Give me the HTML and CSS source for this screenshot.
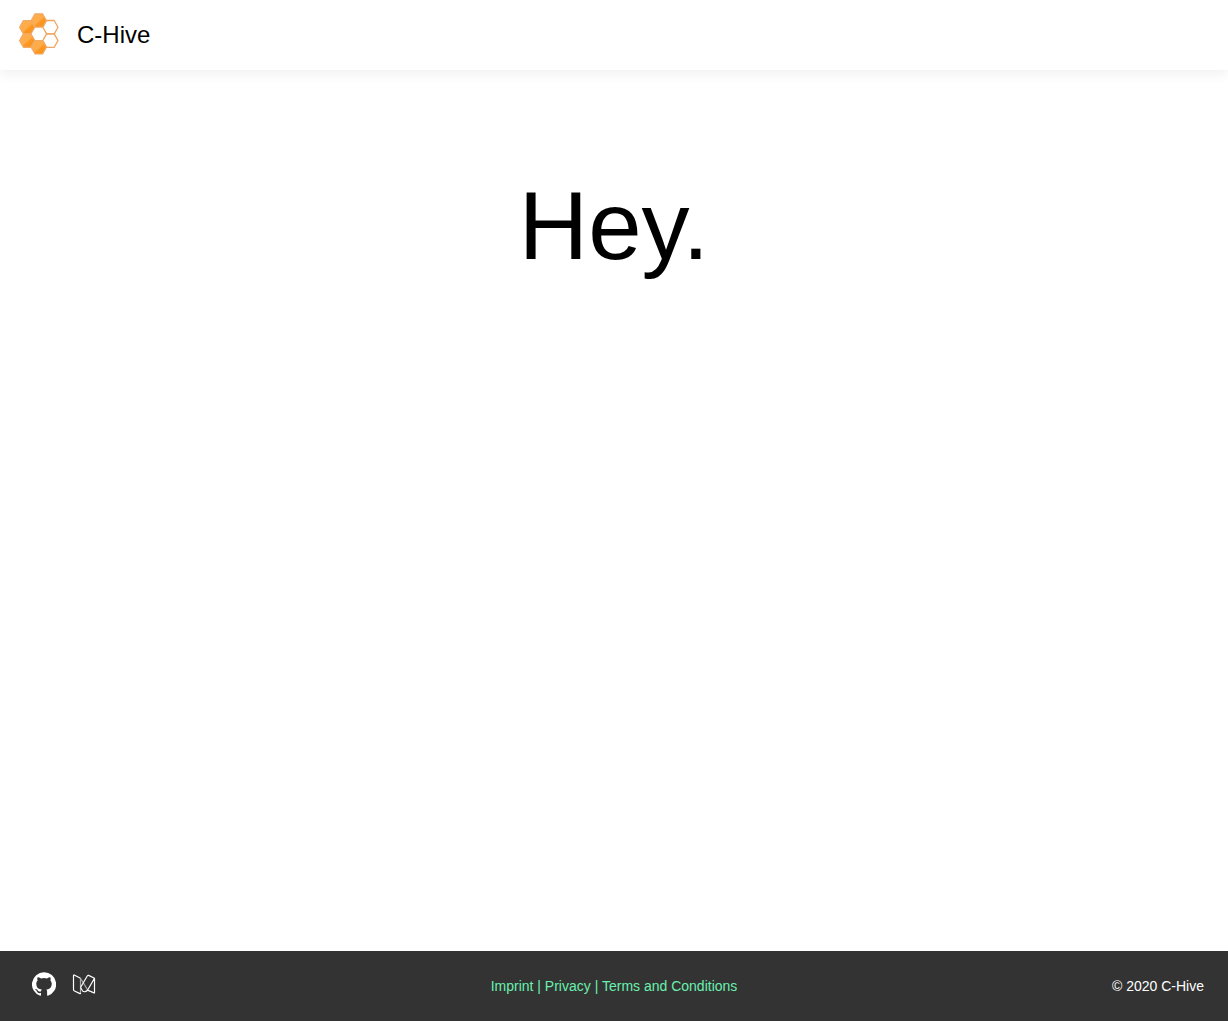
FILE: index.html
```html
<!DOCTYPE html>
<html lang="en">
<head>
<meta charset="utf-8">
<meta name="viewport" content="width=device-width, initial-scale=1">
<title>C-Hive</title>
<link rel="stylesheet" href="styles.css">
</head>
<body>
<header class="header">
  <a class="brand" href="#">
    <svg class="brand-logo" viewBox="0 0 40 42" aria-hidden="true">
      <defs>
        <linearGradient id="honey" x1="0" y1="0" x2="1" y2="1">
          <stop offset="0" stop-color="#ffb04a"/>
          <stop offset=".5" stop-color="#ffab4c"/>
          <stop offset=".6" stop-color="#fb971f"/>
          <stop offset="1" stop-color="#f7931e"/>
        </linearGradient>
        <path id="cell" d="M-7.6 0L-3.8 -6.7H3.8L7.6 0L3.8 6.7H-3.8Z"/>
      </defs>
      <g fill="none" stroke="#f2a45c" stroke-width="1.3" stroke-linejoin="round">
        <use href="#cell" x="31.4" y="14.2"/>
        <use href="#cell" x="31.4" y="27.6"/>
      </g>
      <g fill="url(#honey)" stroke="#f0aa68" stroke-width="1.2" stroke-linejoin="round">
        <use href="#cell" x="8.2" y="14.2"/>
        <use href="#cell" x="8.2" y="27.6"/>
        <use href="#cell" x="19.8" y="7.5"/>
        <use href="#cell" x="19.8" y="34.3"/>
      </g>
    </svg>
    <span>C-Hive</span>
  </a>
</header>
<main class="main">
  <h1 class="greeting">Hey.</h1>
</main>
<footer class="footer">
  <div class="social">
    <a class="social-link" href="#" aria-label="GitHub">
      <svg class="icon" viewBox="0 0 24 24" fill="#fff" aria-hidden="true"><path d="M12 .3a12 12 0 0 0-3.8 23.4c.6.1.8-.3.8-.6v-2c-3.3.7-4-1.6-4-1.6-.6-1.4-1.4-1.8-1.4-1.8-1-.7.1-.7.1-.7 1.2 0 1.9 1.2 1.9 1.2 1 1.8 2.8 1.3 3.5 1 0-.8.4-1.3.7-1.6-2.7-.3-5.5-1.3-5.5-6 0-1.2.5-2.3 1.3-3.1-.2-.4-.6-1.6 0-3.2 0 0 1-.3 3.4 1.2a11.5 11.5 0 0 1 6 0c2.3-1.500 3.300-1.200 3.300-1.200.7 1.600.2 2.800.1 3.200.8.800 1.300 1.900 1.300 3.200 0 4.600-2.800 5.600-5.500 5.900.5.400.9 1 .9 2.200v3.300c0 .3.1.7.8.6A12 12 0 0 0 12 .3"/></svg>
    </a>
    <a class="social-link" href="#" aria-label="Medium">
      <svg class="icon" viewBox="0 0 24 24" fill="none" stroke="#fff" stroke-width="1.2" stroke-linejoin="round" aria-hidden="true"><path stroke="#aaa" d="M8.500 6.300L16 18.500L22.500 21M8.500 6.300V21.700"/><path d="M8.500 6.300L2.200 3Q1.500 2.800 1.500 3.700V17.500Q1.500 18.600 2.500 19L8 21.600Q8.500 21.700 8.500 21M8.500 15.500L15.400 3.800Q15.800 3 16.600 3.400L22.500 6.300V20.500Q22.500 21.200 21.700 20.800L16 18.300M22.500 6.300L15.500 18.200Q12.500 21 10.500 18.800L8.500 15.500"/></svg>
    </a>
  </div>
  <nav class="legal"><a href="#">Imprint</a> | <a href="#">Privacy</a> | <a href="#">Terms and Conditions</a></nav>
  <div class="copyright">© 2020 C-Hive</div>
</footer>
</body>
</html>
```
FILE: styles.css
```css
* {
  box-sizing: border-box;
}

body {
  display: flex;
  flex-direction: column;
  min-height: 100vh;
  margin: 0;
  background: #fff;
  color: #000;
  font-family: "Liberation Sans", Arial, sans-serif;
}

a {
  color: inherit;
  text-decoration: none;
}

.header {
  display: flex;
  align-items: center;
  min-height: 70px;
  padding: 0 19px;
  box-shadow: 0 4px 12px rgba(0, 0, 0, 0.06);
}

.brand {
  display: flex;
  align-items: center;
  gap: 18px;
  font-size: 24px;
  line-height: 32px;
}

.brand-logo {
  width: 40px;
  height: 42px;
  margin-bottom: 2px;
}

.main {
  flex: 1;
  padding: 108px 24px;
}

.greeting {
  margin: 0;
  font-size: 96px;
  font-weight: 400;
  line-height: 96px;
  text-align: center;
}

.footer {
  display: grid;
  grid-template-columns: 1fr auto 1fr;
  align-items: center;
  min-height: 70px;
  padding: 0 24px;
  background: #333;
  color: #fff;
  font-size: 14px;
  line-height: 20px;
}

.social {
  display: flex;
  gap: 16px;
  margin-bottom: 4px;
  padding-left: 8px;
}

.social-link,
.icon {
  display: block;
  width: 24px;
  height: 24px;
}

.legal {
  color: #69f0ae;
}

.copyright {
  text-align: right;
}
```
